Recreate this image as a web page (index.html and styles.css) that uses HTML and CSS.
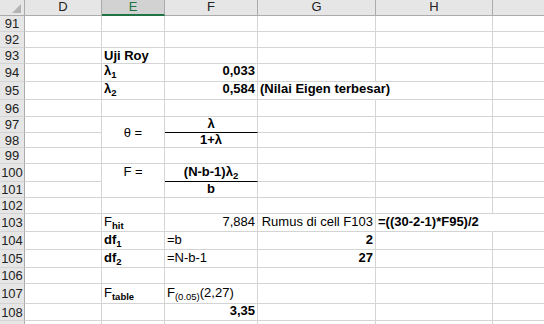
FILE: index.html
```html
<!DOCTYPE html>
<html lang="id">
<head>
    <meta charset="UTF-8">
    <title>Uji Roy</title>
    <link rel="stylesheet" href="styles.css">
</head>
<body>

<div class="sheet">
    <!-- column headers -->
    <div class="corner"></div>
    <div class="ch">D</div>
    <div class="ch sel">E</div>
    <div class="ch">F</div>
    <div class="ch">G</div>
    <div class="ch">H</div>
    <div class="ch"></div>

    <div class="rh">91</div><div class="c"></div><div class="c"></div><div class="c"></div><div class="c"></div><div class="c"></div><div class="c"></div>
    <div class="rh">92</div><div class="c"></div><div class="c"></div><div class="c"></div><div class="c"></div><div class="c"></div><div class="c"></div>
    <div class="rh">93</div><div class="c"></div><div class="c b"><span>Uji Roy</span></div><div class="c"></div><div class="c"></div><div class="c"></div><div class="c"></div>
    <div class="rh">94</div><div class="c"></div><div class="c b pb3"><span>λ<sub>1</sub></span></div><div class="c b r pb3"><span>0,033</span></div><div class="c"></div><div class="c"></div><div class="c"></div>
    <div class="rh">95</div><div class="c"></div><div class="c b pb3"><span>λ<sub>2</sub></span></div><div class="c b r pb3"><span>0,584</span></div><div class="c b ov pb3"><span>(Nilai Eigen terbesar)</span></div><div class="c"></div><div class="c"></div>
    <div class="rh">96</div><div class="c"></div><div class="c"></div><div class="c"></div><div class="c"></div><div class="c"></div><div class="c"></div>

    <!-- theta = lambda / (1 + lambda) -->
    <div class="rh">97</div><div class="c"></div><div class="c span2 mid ctr"><span>θ =</span></div><div class="c b ctr pb1 frac"><span>λ</span></div><div class="c"></div><div class="c"></div><div class="c"></div>
    <div class="rh">98</div><div class="c"></div><div class="c b ctr"><span>1+λ</span></div><div class="c"></div><div class="c"></div><div class="c"></div>
    <div class="rh">99</div><div class="c"></div><div class="c"></div><div class="c"></div><div class="c"></div><div class="c"></div><div class="c"></div>

    <!-- F = (N-b-1) lambda2 / b -->
    <div class="rh">100</div><div class="c"></div><div class="c span2 top ctr"><span>F =</span></div><div class="c b ctr pb2 frac"><span>(N-b-1)λ<sub>2</sub></span></div><div class="c"></div><div class="c"></div><div class="c"></div>
    <div class="rh">101</div><div class="c"></div><div class="c b ctr pb1"><span>b</span></div><div class="c"></div><div class="c"></div><div class="c"></div>
    <div class="rh">102</div><div class="c"></div><div class="c"></div><div class="c"></div><div class="c"></div><div class="c"></div><div class="c"></div>

    <div class="rh">103</div><div class="c"></div><div class="c pb2"><span>F<sub class="b">hit</sub></span></div><div class="c r pb2"><span>7,884</span></div><div class="c r pb2"><span>Rumus di cell F103</span></div><div class="c b pb2 ov"><span>=((30-2-1)*F95)/2</span></div><div class="c"></div>
    <div class="rh">104</div><div class="c"></div><div class="c b pb2"><span>df<sub>1</sub></span></div><div class="c pb2"><span>=b</span></div><div class="c b r pb2"><span>2</span></div><div class="c"></div><div class="c"></div>
    <div class="rh">105</div><div class="c"></div><div class="c b pb2"><span>df<sub>2</sub></span></div><div class="c pb2"><span>=N-b-1</span></div><div class="c b r pb2"><span>27</span></div><div class="c"></div><div class="c"></div>
    <div class="rh">106</div><div class="c"></div><div class="c"></div><div class="c"></div><div class="c"></div><div class="c"></div><div class="c"></div>
    <div class="rh">107</div><div class="c"></div><div class="c pb3"><span>F<sub class="b">table</sub></span></div><div class="c pb3"><span>F<sub>(0.05)</sub>(2,27)</span></div><div class="c"></div><div class="c"></div><div class="c"></div>
    <div class="rh">108</div><div class="c"></div><div class="c"></div><div class="c b r pb2"><span>3,35</span></div><div class="c"></div><div class="c"></div><div class="c"></div>
    <div class="rh">109</div><div class="c"></div><div class="c"></div><div class="c"></div><div class="c"></div><div class="c"></div><div class="c"></div>
</div>

</body>
</html>
```

FILE: styles.css
```css
body {
    margin: 0;
    width: 544px;
    height: 324px;
    overflow: hidden;
    background: #fff;
    font-family: "Liberation Sans", Arial, sans-serif;
    font-size: 13px;
    color: #000;
}
.sheet {
    display: grid;
    grid-template-columns: 25px 77px 63px 93px 118px 117px 60px;
    grid-template-rows: 16px 16px 16px 16px 18px 18px 17px 16px 15px 16px 18px 16px 16px 18px 18px 18px 16px 20px 17px 16px;
    background: #fff;
}
.sheet > div {
    box-sizing: border-box;
    min-width: 0;
}

/* headers */
.corner {
    background: #e6e6e6;
    border-right: 1px solid #ababab;
    border-bottom: 1px solid #ababab;
    position: relative;
}
.corner::after {
    content: "";
    position: absolute;
    right: 3px;
    bottom: 2px;
    width: 0;
    height: 0;
    border-left: 9px solid transparent;
    border-bottom: 9px solid #b4b4b4;
}
.ch {
    background: #e6e6e6;
    border-right: 1px solid #ababab;
    border-bottom: 1px solid #ababab;
    text-align: center;
    line-height: 13px;
    color: #222;
}
.ch.sel {
    background: #d2d2d2;
    color: #217346;
    border-bottom: 2px solid #217346;
}
.rh {
    background: #e6e6e6;
    border-right: 1px solid #ababab;
    border-bottom: 1px solid #d4d4d4;
    display: flex;
    align-items: center;
    justify-content: center;
    color: #222;
    line-height: 15px;
}

/* cells */
.c {
    border-right: 1px solid #d4d4d4;
    border-bottom: 1px solid #d4d4d4;
    display: flex;
    align-items: flex-end;
    padding: 0 2px;
    line-height: 15px;
    white-space: nowrap;
}
.b { font-weight: bold; }
.r { justify-content: flex-end; }
.ctr { justify-content: center; }
.mid { align-items: center; }
.top { align-items: flex-start; }
.ov { border-right-color: transparent; overflow: visible; }
.span2 { grid-row: span 2; }
.frac { border-bottom-color: #000; }
.pb1 { padding-bottom: 1px; }
.pb2 { padding-bottom: 2px; }
.pb3 { padding-bottom: 3px; }

sub {
    font-size: 9.5px;
    vertical-align: -3px;
    line-height: 0;
}
```
